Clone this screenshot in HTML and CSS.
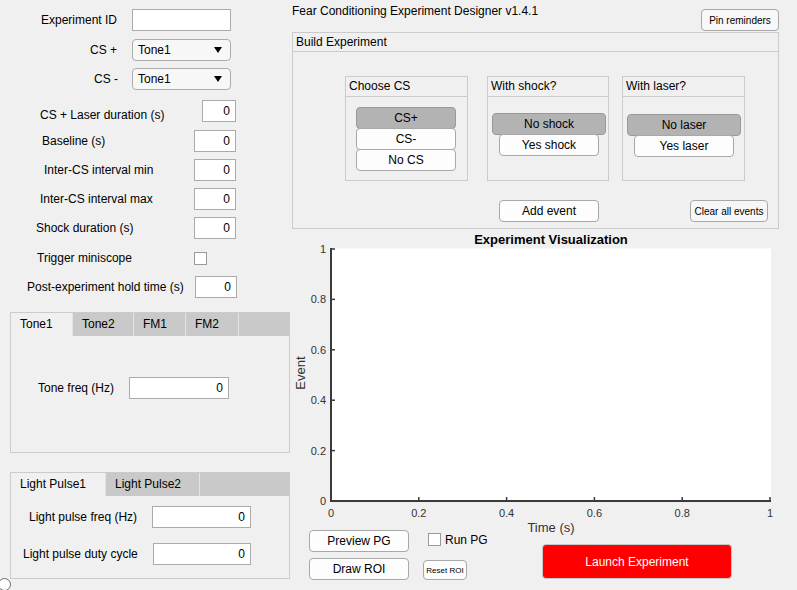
FILE: index.html
```html
<!DOCTYPE html>
<html>
<head>
<meta charset="utf-8">
<title>Fear Conditioning Experiment Designer</title>
<link rel="stylesheet" href="styles.css">
</head>
<body>
<div class="app">
  <div class="left">
    <div class="row r-id"><span class="lbl">Experiment ID</span><div class="edit w-id"></div></div>
    <div class="row r-csp"><span class="lbl">CS +</span><div class="dd"><span>Tone1</span><span class="arr"></span></div></div>
    <div class="row r-csm"><span class="lbl">CS -</span><div class="dd"><span>Tone1</span><span class="arr"></span></div></div>
    <div class="row r-laser"><span class="lbl">CS + Laser duration (s)</span><div class="edit w-laser">0</div></div>
    <div class="row r-base"><span class="lbl">Baseline (s)</span><div class="edit w-num">0</div></div>
    <div class="row r-min"><span class="lbl">Inter-CS interval min</span><div class="edit w-num">0</div></div>
    <div class="row r-max"><span class="lbl">Inter-CS interval max</span><div class="edit w-num">0</div></div>
    <div class="row r-shock"><span class="lbl">Shock duration (s)</span><div class="edit w-num">0</div></div>
    <div class="row r-trig"><span class="lbl">Trigger miniscope</span><div class="cbox"></div></div>
    <div class="row r-post"><span class="lbl">Post-experiment hold time (s)</span><div class="edit w-num">0</div></div>

    <div class="tabgroup tg-tone">
      <div class="tabstrip">
        <div class="tab active t-tone1">Tone1</div>
        <div class="tab t-tone2">Tone2</div>
        <div class="tab t-fm1">FM1</div>
        <div class="tab t-fm2">FM2</div>
      </div>
      <div class="tabbody">
        <div class="row r-tone"><span class="lbl">Tone freq (Hz)</span><div class="edit w-100">0</div></div>
      </div>
    </div>

    <div class="tabgroup tg-light">
      <div class="tabstrip">
        <div class="tab active t-lp1">Light Pulse1</div>
        <div class="tab t-lp2">Light Pulse2</div>
      </div>
      <div class="tabbody">
        <div class="row r-lpf"><span class="lbl">Light pulse freq (Hz)</span><div class="edit w-99">0</div></div>
        <div class="row r-lpd"><span class="lbl">Light pulse duty cycle</span><div class="edit w-98">0</div></div>
      </div>
    </div>
  </div>

  <div class="right">
    <div class="hdr">
      <span class="apptitle">Fear Conditioning Experiment Designer v1.4.1</span>
      <div class="btn pin">Pin reminders</div>
    </div>

    <div class="panel build">
      <div class="ptitle">Build Experiment</div>
      <div class="subs">
        <div class="sub s-cs">
          <div class="stitle">Choose CS</div>
          <div class="sbody">
            <div class="btn tgl on">CS+</div>
            <div class="btn tgl">CS-</div>
            <div class="btn tgl">No CS</div>
          </div>
        </div>
        <div class="sub s-shock">
          <div class="stitle">With shock?</div>
          <div class="sbody">
            <div class="btn tgl wide on">No shock</div>
            <div class="btn tgl narrow">Yes shock</div>
          </div>
        </div>
        <div class="sub s-laser">
          <div class="stitle">With laser?</div>
          <div class="sbody">
            <div class="btn tgl wide on">No laser</div>
            <div class="btn tgl narrow">Yes laser</div>
          </div>
        </div>
      </div>
      <div class="actions">
        <div class="btn add">Add event</div>
        <div class="btn clear">Clear all events</div>
      </div>
    </div>

    <svg class="plot" width="505" height="300" viewBox="0 0 505 300">
      <rect x="40" y="18.5" width="439" height="252" fill="#ffffff"/>
      <text class="ttl" x="259" y="13.5" text-anchor="middle">Experiment Visualization</text>
      <g stroke="#3a3a3a" stroke-width="2" fill="none">
        <line x1="39" y1="18" x2="39" y2="272"/>
        <line x1="38" y1="271" x2="479" y2="271"/>
      </g>
      <g stroke="#3a3a3a" stroke-width="1.5">
        <line x1="39" y1="19" x2="43" y2="19"/>
        <line x1="39" y1="69.4" x2="43" y2="69.4"/>
        <line x1="39" y1="119.8" x2="43" y2="119.8"/>
        <line x1="39" y1="170.2" x2="43" y2="170.2"/>
        <line x1="39" y1="220.6" x2="43" y2="220.6"/>
        <line x1="126.8" y1="271" x2="126.8" y2="267"/>
        <line x1="214.6" y1="271" x2="214.6" y2="267"/>
        <line x1="302.4" y1="271" x2="302.4" y2="267"/>
        <line x1="390.2" y1="271" x2="390.2" y2="267"/>
        <line x1="478" y1="271" x2="478" y2="267"/>
      </g>
      <g class="tick" text-anchor="end">
        <text x="34" y="23">1</text>
        <text x="34" y="73.4">0.8</text>
        <text x="34" y="123.8">0.6</text>
        <text x="34" y="174.2">0.4</text>
        <text x="34" y="224.6">0.2</text>
        <text x="34" y="275">0</text>
      </g>
      <g class="tick" text-anchor="middle">
        <text x="39" y="286.5">0</text>
        <text x="126.8" y="286.5">0.2</text>
        <text x="214.6" y="286.5">0.4</text>
        <text x="302.4" y="286.5">0.6</text>
        <text x="390.2" y="286.5">0.8</text>
        <text x="478" y="286.5">1</text>
      </g>
      <text class="axl" x="259" y="302" text-anchor="middle">Time (s)</text>
      <text class="axl" x="0" y="0" text-anchor="middle" transform="translate(12.5 143) rotate(-90)">Event</text>
    </svg>

    <div class="bottom">
      <div class="bcol1">
        <div class="btn b100">Preview PG</div>
        <div class="btn b100">Draw ROI</div>
      </div>
      <div class="bcol2">
        <div class="chk"><span class="cbox"></span><span>Run PG</span></div>
        <div class="btn reset">Reset ROI</div>
      </div>
      <div class="btn launch">Launch Experiment</div>
    </div>
  </div>
</div>
<div class="radio"></div>
</body>
</html>
```

FILE: styles.css
```css
* { box-sizing: border-box; }
html, body { margin: 0; padding: 0; }
body {
  background: #f0f0f0;
  font-family: "Liberation Sans", Arial, sans-serif;
  font-size: 12px;
  color: #000;
  width: 797px;
  height: 590px;
  overflow: hidden;
  position: relative;
}
.app { display: flex; height: 590px; }
.left { width: 292px; flex: none; }
.right { width: 505px; flex: none; }

/* form rows */
.row {
  display: grid;
  grid-template-columns: var(--fx) auto;
  align-items: center;
  height: 22px;
}
.lbl { padding-left: var(--lx); white-space: nowrap; line-height: 14px; }
.r-id    { --lx: 41px; --fx: 132px; margin-top: 9px; }
.r-csp   { --lx: 90px; --fx: 132px; margin-top: 8px; }
.r-csm   { --lx: 94px; --fx: 132px; margin-top: 7px; }
.r-laser { --lx: 40px; --fx: 202px; margin-top: 10px; }
.r-laser .lbl { padding-top: 8px; }
.r-base  { --lx: 42px; --fx: 194px; margin-top: 8px; }
.r-min   { --lx: 44px; --fx: 194px; margin-top: 7px; }
.r-max   { --lx: 40px; --fx: 194px; margin-top: 7px; }
.r-shock { --lx: 36px; --fx: 194px; margin-top: 7px; }
.r-trig  { --lx: 37px; --fx: 194px; margin-top: 8px; }
.r-post  { --lx: 27px; --fx: 195px; margin-top: 7px; }

.edit {
  height: 22px;
  background: #fff;
  border: 1px solid #ababab;
  text-align: right;
  padding-right: 5px;
  line-height: 20px;
}
.w-id { width: 99px; }
.w-laser { width: 34px; }
.w-num { width: 42px; }
.w-100 { width: 100px; }
.w-99 { width: 99px; }
.w-98 { width: 98px; }

.dd {
  width: 99px;
  height: 22px;
  border: 1px solid #acacac;
  border-radius: 4px;
  background: #f7f7f7;
  display: flex;
  align-items: center;
  justify-content: space-between;
  padding-left: 5px;
  padding-right: 8px;
}
.dd .arr {
  width: 0;
  height: 0;
  border-left: 4px solid transparent;
  border-right: 4px solid transparent;
  border-top: 6px solid #000;
}
.cbox {
  display: inline-block;
  width: 13px;
  height: 13px;
  background: #fff;
  border: 1px solid #9a9a9a;
}

/* tab groups */
.tabgroup {
  margin-left: 10px;
  width: 280px;
  border: 1px solid #cbcbcb;
  display: flex;
  flex-direction: column;
}
.tg-tone { margin-top: 14px; height: 141px; }
.tg-light { margin-top: 19px; height: 107px; }
.tabstrip {
  display: flex;
  height: 23px;
  background: #c9c9c9;
  flex: none;
}
.tab {
  height: 23px;
  line-height: 22px;
  padding-left: 9px;
  border-right: 1px solid #e4e4e4;
  white-space: nowrap;
}
.tab.active { background: #f0f0f0; }
.t-tone1 { width: 62px; }
.t-tone2 { width: 61px; }
.t-fm1 { width: 52px; }
.t-fm2 { width: 53px; }
.t-lp1 { width: 95px; }
.t-lp2 { width: 94px; }
.tabbody { flex: 1; }
.r-tone { --lx: 27px; --fx: 118px; margin-top: 41px; }
.r-lpf { --lx: 18px; --fx: 141px; margin-top: 10px; }
.r-lpd { --lx: 12px; --fx: 142px; margin-top: 15px; }

/* buttons */
.btn {
  background: #fdfdfd;
  border: 1px solid #a8a8a8;
  border-radius: 4px;
  display: flex;
  align-items: center;
  justify-content: center;
  height: 22px;
  white-space: nowrap;
}

/* right column */
.hdr { display: flex; width: 487px; height: 32px; }
.apptitle { margin-top: 4px; line-height: 14px; }
.pin {
  margin-left: auto;
  margin-top: 9px;
  width: 78px;
  font-size: 10px;
  background: #f7f7f7;
}

.panel {
  width: 487px;
  border: 1px solid #cbcbcb;
}
.build { height: 197px; }
.ptitle {
  height: 19px;
  border-bottom: 1px solid #cbcbcb;
  padding-left: 3px;
  line-height: 19px;
}
.subs { display: flex; margin-top: 24px; padding-left: 52px; }
.sub {
  height: 105px;
  border: 1px solid #cbcbcb;
}
.stitle {
  height: 20px;
  border-bottom: 1px solid #cbcbcb;
  padding-left: 3px;
  line-height: 19px;
}
.s-cs { width: 123px; }
.s-shock { width: 122px; margin-left: 19px; }
.s-laser { width: 123px; margin-left: 13px; }
.sbody { display: flex; flex-direction: column; }
.s-cs .sbody { padding-top: 10px; padding-left: 10px; }
.s-shock .sbody { padding-top: 16px; }
.s-laser .sbody { padding-top: 17px; }
.tgl { width: 100px; }
.tgl + .tgl { margin-top: -1px; }
.tgl.on { background: #b3b3b3; border-color: #999; }
.tgl.wide { width: 114px; margin-left: 4px; }
.tgl.narrow { width: 100px; margin-left: 11px; }

.actions { display: flex; margin-top: 19px; }
.add { margin-left: 206px; width: 100px; }
.clear { margin-left: 91px; width: 78px; font-size: 10px; background: #f7f7f7; }

.plot { display: block; margin-top: 1px; overflow: visible; }
.plot text { font-family: "Liberation Sans", Arial, sans-serif; }
.plot .ttl { font-weight: bold; font-size: 13px; fill: #000; }
.plot .tick { font-size: 11px; fill: #333; }
.plot .axl { font-size: 13px; fill: #333; }

.bottom { display: flex; height: 60px; }
.bcol1 { display: flex; flex-direction: column; gap: 6px; margin-left: 17px; }
.b100 { width: 100px; }
.bcol2 { display: flex; flex-direction: column; align-items: flex-start; margin-left: 14px; width: 80px; }
.chk { display: flex; align-items: center; gap: 4px; margin-top: 3px; margin-left: 5px; height: 13px; }
.reset { margin-top: 14px; width: 44px; height: 20px; font-size: 8px; }
.launch {
  margin-left: 39px;
  margin-top: 14px;
  width: 190px;
  height: 35px;
  background: #ff0000;
  border-color: #c8c8c8;
  color: #fff;
}

.radio {
  position: absolute;
  left: -2px;
  top: 578px;
  width: 13px;
  height: 13px;
  border: 1px solid #6d6d6d;
  border-radius: 50%;
  background: #fff;
}
```
